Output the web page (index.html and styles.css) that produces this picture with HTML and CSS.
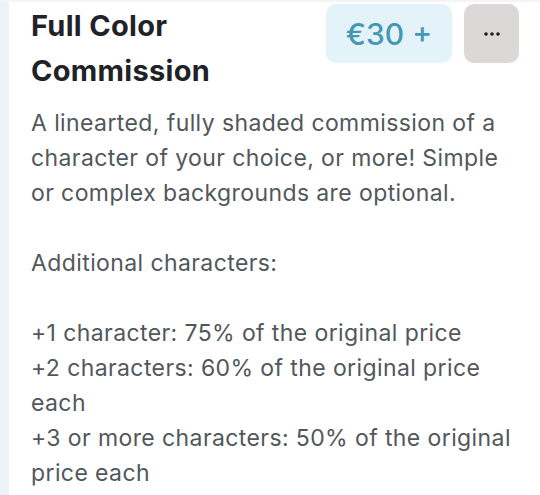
FILE: index.html
```html
<!DOCTYPE html>
<html lang="en">
<head>
    <meta charset="UTF-8">
    <meta name="viewport" content="width=device-width, initial-scale=1.0">
    <title>Full Color Commission</title>
    <link rel="stylesheet" href="styles.css">
</head>
<body>

    <!-- Commission card -->
    <div class="card">
        <div class="card-header">
            <h1 class="title">Full Color Commission</h1>
            <div class="price">€30 +</div>
            <button class="more" aria-label="More options">
                <svg width="16" height="4" viewBox="0 0 16 4">
                    <circle cx="2" cy="2" r="1.8" fill="#1c1c1c"/>
                    <circle cx="8" cy="2" r="1.8" fill="#1c1c1c"/>
                    <circle cx="14" cy="2" r="1.8" fill="#1c1c1c"/>
                </svg>
            </button>
        </div>

        <div class="description">
            <p>A linearted, fully shaded commission of a character of your choice, or more! Simple or complex backgrounds are optional.</p>
            <p>Additional characters:</p>
            <p>+1 character: 75% of the original price<br>
            +2 characters: 60% of the original price each<br>
            +3 or more characters: 50% of the original price each</p>
        </div>
    </div>

</body>
</html>
```

FILE: styles.css
```css
body {
    margin: 0;
    padding: 0;
    background-color: #ffffff;
    font-family: Inter, 'Noto Sans', sans-serif;
}

.card {
    border-left: 9px solid #eef3f8;
    border-top: 2px solid #f4f5f7;
    padding: 0 21px 0 22px;
    height: 493px;
    overflow: hidden;
}

.card-header {
    display: flex;
    align-items: flex-start;
}

.title {
    flex: 1;
    margin: 0;
    max-width: 240px;
    font-size: 29px;
    font-weight: 700;
    letter-spacing: 0.3px;
    line-height: 45px;
    color: #1f2328;
    margin-top: 1px;
}

.price {
    margin-left: auto;
    margin-top: 2px;
    width: 126px;
    height: 59px;
    border-radius: 10px;
    background-color: #e4f3fa;
    color: #4597b4;
    font-size: 30px;
    font-weight: 500;
    display: flex;
    justify-content: center;
    align-items: center;
}

.more {
    margin-left: 12px;
    margin-top: 2px;
    width: 55px;
    height: 59px;
    border: none;
    border-radius: 10px;
    background-color: #ddd8d8;
    display: flex;
    justify-content: center;
    align-items: center;
    padding: 0;
}

.description {
    margin-top: 13px;
    color: #52575b;
    font-size: 23px;
    letter-spacing: 0.4px;
    line-height: 35px;
}

.description p {
    margin: 0 0 35px 0;
}
```
